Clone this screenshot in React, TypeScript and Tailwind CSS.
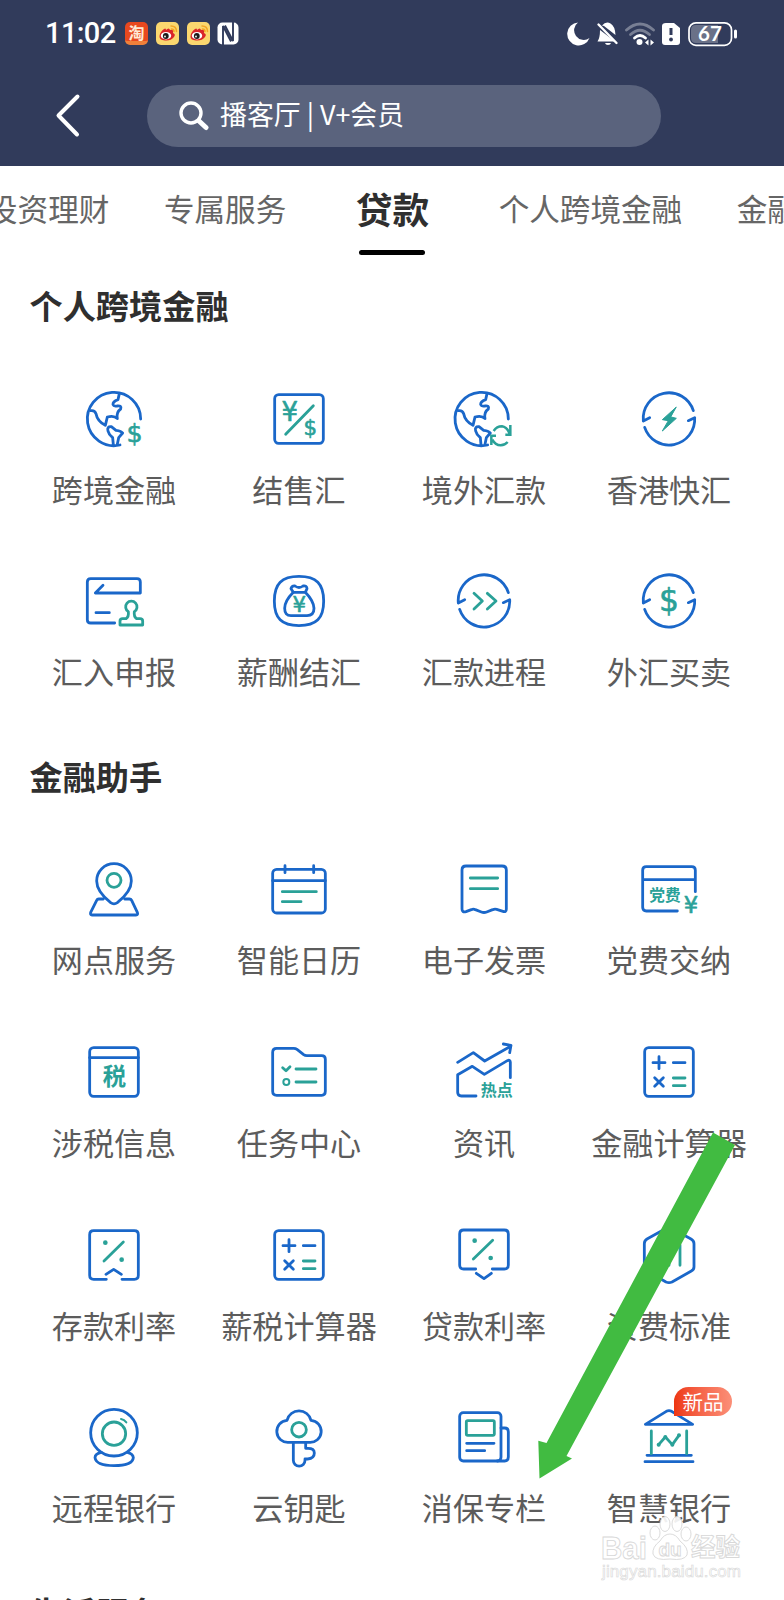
import type { ReactNode } from "react";

const BLUE = "#1a67c9";
const TEAL = "#2aa198";

function Icon({ children }: { children: ReactNode }) {
  return (
    <svg
      className="block h-[60px] w-[60px] shrink-0 overflow-visible"
      viewBox="-90 -90 180 180"
      fill="none"
      stroke={BLUE}
      strokeWidth={8.4}
      strokeLinecap="round"
      strokeLinejoin="round"
    >
      {children}
    </svg>
  );
}

// Characters centred on a point inside an icon.
function Glyph({ x, y, size, children }: { x: number; y: number; size: number; children: ReactNode }) {
  return (
    <text
      x={x}
      y={y + size * 0.37}
      fontSize={size}
      fontWeight={700}
      textAnchor="middle"
      fill={TEAL}
      stroke="none"
      className="font-['Noto_Sans_CJK_SC',sans-serif]"
    >
      {children}
    </text>
  );
}

function Currency({ x, y, size, children }: { x: number; y: number; size: number; children: string }) {
  return (
    <text
      x={x}
      y={y + size * (children === "$" ? 0.31 : 0.365)}
      fontSize={size}
      textAnchor="middle"
      fill={TEAL}
      stroke={TEAL}
      strokeWidth={1.8}
      className="font-['DejaVu_Sans',sans-serif]"
    >
      {children}
    </text>
  );
}

function Globe() {
  return (
    <>
      <path d="M80 0A80 80 0 1 0 18 78" />
      <path d="M16 -76L12 -58Q-4 -52 -3 -43Q-1 -37 9 -39Q24 -41 20 -30Q6 -20 10 -1Q0 -12 -20 -6L-26 19Q-50 6 -54 -16Q-58 -27 -70 -25" />
      <path d="M10 76L14 56L26 42Q22 36 6 34L-8 23Q-22 22 -18 36Q-16 46 -4 56L-2 77" />
    </>
  );
}

function CircleArrows() {
  return (
    <>
      <path d="M-58 -4L-77 6A77 77 0 0 1 73 -25" />
      <path d="M58 5L77 -4A77 77 0 0 1 -73 25" />
    </>
  );
}

function Calculator() {
  return (
    <Icon>
      <rect x={-73} y={-73} width={146} height={146} rx={12} />
      <path d="M-48 -28H-12M-30 -46V-10M13 -28H48M-43 17L-17 43M-17 17L-43 43" />
      <path d="M13 18H48M13 41H48" stroke={TEAL} />
    </Icon>
  );
}

const crossBorder = [
  {
    label: "跨境金融",
    icon: (
      <Icon>
        <Globe />
        <g stroke={TEAL} strokeWidth={4}>
          <Currency x={62} y={46} size={76}>$</Currency>
        </g>
      </Icon>
    ),
  },
  {
    label: "结售汇",
    icon: (
      <Icon>
        <rect x={-73} y={-73} width={146} height={146} rx={12} />
        <path d="M43 -40L-40 46" stroke={TEAL} />
        <Currency x={-28} y={-24} size={78}>¥</Currency>
        <Currency x={34} y={29} size={64}>$</Currency>
      </Icon>
    ),
  },
  {
    label: "境外汇款",
    icon: (
      <Icon>
        <g transform="translate(-7 0)">
          <Globe />
        </g>
        <g stroke={TEAL} strokeWidth={7.5} strokeLinecap="butt" strokeLinejoin="miter">
          <path d="M29 36Q38 22 54 22Q68 24 76 42M79 18V47H64" />
          <path d="M22 78V50H36M25 62Q34 79 50 79Q63 78 71 69" />
        </g>
      </Icon>
    ),
  },
  {
    label: "香港快汇",
    icon: (
      <Icon>
        <CircleArrows />
        <path d="M21 -35L-20 2L-2 5L-20 36L22 -2L6 -6Z" fill={TEAL} stroke={TEAL} strokeWidth={3} />
      </Icon>
    ),
  },
  {
    label: "汇入申报",
    icon: (
      <Icon>
        <path d="M2 66H-70Q-80 66 -80 56V-57Q-80 -67 -70 -67H69Q79 -67 79 -57V-24H-56L-33 -47M-54 35H-14" />
        <path d="M26 53H36Q45 48 43 32A17 17 0 1 1 61 32Q59 48 68 53H78Q86 53 86 60V72H18V60Q18 53 26 53Z" stroke={TEAL} />
      </Icon>
    ),
  },
  {
    label: "薪酬结汇",
    icon: (
      <Icon>
        <path d="M0 -74C52 -74 74 -52 74 0C74 52 52 74 0 74C-52 74 -74 52 -74 0C-74 -52 -52 -74 0 -74Z" />
        <path d="M-17 -26Q-43 0 -43 22Q-43 44 -24 44H24Q45 44 45 22Q44 0 19 -26Z" />
        <path d="M-17 -26L-24 -37Q-22 -46 -12 -45Q0 -36 12 -45Q24 -47 24 -37L19 -26" />
        <Currency x={1} y={11} size={64}>¥</Currency>
      </Icon>
    ),
  },
  {
    label: "汇款进程",
    icon: (
      <Icon>
        <CircleArrows />
        <path d="M-30 -23L-5 0L-30 24M10 -23L36 0L10 24" stroke={TEAL} />
      </Icon>
    ),
  },
  {
    label: "外汇买卖",
    icon: (
      <Icon>
        <CircleArrows />
        <Currency x={0} y={0} size={94}>$</Currency>
      </Icon>
    ),
  },
];

const assistant = [
  {
    label: "网点服务",
    icon: (
      <Icon>
        <path d="M-10 41C-34 22 -52 2 -52 -24A52 52 0 0 1 52 -24C52 2 34 22 10 41Q0 48 -10 41Z" />
        <path d="M-32 30H-46Q-50 30 -52 34L-70 70Q-72 78 -66 78H66Q73 78 70 70L53 34Q51 30 46 30H32" />
        <circle cx={0} cy={-26} r={21} stroke={TEAL} />
      </Icon>
    ),
  },
  {
    label: "智能日历",
    icon: (
      <Icon>
        <rect x={-79} y={-59} width={158} height={131} rx={12} />
        <path d="M-79 -25H79M-42 -70V-49M44 -70V-49" />
        <path d="M-50 8H52M-50 38H6" stroke={TEAL} />
      </Icon>
    ),
  },
  {
    label: "电子发票",
    icon: (
      <Icon>
        <path d="M-66 60V-57Q-66 -69 -54 -69H54Q67 -69 67 -57V60Q67 71 57 67L38 61Q32 59 26 62L8 69Q0 72 -8 69L-26 62Q-32 59 -38 62L-54 68Q-66 71 -66 60Z" />
        <path d="M-41 -33H41M-41 -1H41" stroke={TEAL} />
      </Icon>
    ),
  },
  {
    label: "党费交纳",
    icon: (
      <Icon>
        <path d="M25 66H-68Q-79 66 -79 55V-56Q-79 -67 -68 -67H68Q79 -67 79 -56V8M-79 -28H79" />
        <Glyph x={-12} y={19} size={47}>党费</Glyph>
        <Currency x={66} y={48} size={68}>¥</Currency>
      </Icon>
    ),
  },
  {
    label: "涉税信息",
    icon: (
      <Icon>
        <rect x={-73} y={-73} width={146} height={146} rx={12} />
        <path d="M-73 -43H73" />
        <Glyph x={1} y={12} size={70}>税</Glyph>
      </Icon>
    ),
  },
  {
    label: "任务中心",
    icon: (
      <Icon>
        <path d="M-67 -71H-16Q-10 -71 -6 -68L14 -52Q18 -49 24 -49H68Q79 -49 79 -38V58Q79 70 68 70H-67Q-79 70 -79 58V-59Q-79 -71 -67 -71Z" />
        <path d="M-49 -13L-39 -4L-27 -16M-9 -9H51M-9 30H51" stroke={TEAL} />
        <circle cx={-38} cy={30} r={9} stroke={TEAL} strokeWidth={6} />
      </Icon>
    ),
  },
  {
    label: "资讯",
    icon: (
      <Icon>
        <path d="M-79 -29L-32 -58L2 -33L80 -77M58 -84L81 -80L77 -58" />
        <path d="M-24 72H-68Q-79 72 -79 61V8L-35 -17L1 7L70 -34Q79 -38 79 -29V17" />
        <Glyph x={38} y={53} size={48}>热点</Glyph>
      </Icon>
    ),
  },
  { label: "金融计算器", icon: <Calculator /> },
  {
    label: "存款利率",
    icon: (
      <Icon>
        <path d="M-23 73H-61Q-73 73 -73 61V-61Q-73 -73 -61 -73H61Q73 -73 73 -61V61Q73 73 61 73H24M-24 58L-1 43L22 58" />
        <path d="M28 -39L-30 18" stroke={TEAL} />
        <g fill={TEAL} stroke="none">
          <circle cx={-26} cy={-37} r={7} />
          <circle cx={23} cy={14} r={7} />
        </g>
      </Icon>
    ),
  },
  { label: "薪税计算器", icon: <Calculator /> },
  {
    label: "贷款利率",
    icon: (
      <Icon>
        <path d="M-25 42H-61Q-73 42 -73 30V-63Q-73 -75 -61 -75H61Q73 -75 73 -63V30Q73 42 61 42H25M-23 55L0 71L22 55" />
        <path d="M26 -44L-32 12" stroke={TEAL} />
        <g fill={TEAL} stroke="none">
          <circle cx={-28} cy={-43} r={7} />
          <circle cx={20} cy={9} r={7} />
        </g>
      </Icon>
    ),
  },
  {
    label: "资费标准",
    icon: (
      <Icon>
        <path d="M-8 -80Q0 -84 8 -80L66 -48Q75 -43 75 -34V35Q75 44 67 48L9 81Q0 85 -9 81L-66 48Q-74 43 -74 34V-34Q-74 -43 -66 -48Z" />
        <path d="M33 -30V31M0 -10V31M-33 5V31" stroke={TEAL} />
      </Icon>
    ),
  },
  {
    label: "远程银行",
    icon: (
      <Icon>
        <circle cx={0} cy={-13} r={70} />
        <path d="M-38 46Q-57 50 -57 62Q-54 86 0 86Q56 86 58 62Q57 50 40 46" />
        <circle cx={0} cy={-10} r={35} stroke={TEAL} />
        <path d="M21 -54Q31 -52 37 -44" stroke={TEAL} strokeWidth={6} />
      </Icon>
    ),
  },
  {
    label: "云钥匙",
    icon: (
      <Icon>
        <path d="M-31 16A33 33 0 0 1 -36 -50A37 37 0 0 1 36 -50A33 33 0 0 1 31 16Z" />
        <path d="M-17 16V70A17.5 17.5 0 0 0 18 70V66H26Q46 64 46 48Q46 34 27 34H20V16" />
        <circle cx={0} cy={-22} r={22} stroke={TEAL} />
      </Icon>
    ),
  },
  {
    label: "消保专栏",
    icon: (
      <Icon>
        <rect x={-73} y={-73} width={124} height={145} rx={11} />
        <path d="M51 -27H62Q73 -27 73 -16V60Q73 72 62 72H40M-52 19H30M-52 41H2" />
        <rect x={-53} y={-49} width={84} height={44} rx={4} stroke={TEAL} />
      </Icon>
    ),
  },
  {
    label: "智慧银行",
    badge: "新品",
    icon: (
      <Icon>
        <path d="M-71 -38L-8 -77Q0 -81 8 -77L71 -38ZM-66 55H67M-72 74H72" />
        <path d="M-53 -18V50M53 -18V50M-31 23L-11 0L10 23L30 -5" stroke={TEAL} />
        <g fill={TEAL} stroke="none">
          <circle cx={-31} cy={23} r={6} />
          <circle cx={-11} cy={0} r={6} />
          <circle cx={10} cy={23} r={6} />
          <circle cx={30} cy={-5} r={6} />
        </g>
      </Icon>
    ),
  },
];

type Item = { label: string; icon: ReactNode; badge?: string };

function Section({ title, items }: { title: string; items: Item[] }) {
  return (
    <section className="-mb-[2.5px]">
      <h2 className="pl-[29.5px] text-[33.2px] leading-[48px] font-bold text-[#2f2f2f]">{title}</h2>
      <div className="ml-[21.5px] grid w-[740px] grid-cols-4 pt-[59.5px]">
        {items.map((item) => (
          <div key={item.label} className="relative flex h-[182.75px] flex-col items-center">
            {item.icon}
            <span className="mt-[17px] text-[31.1px] leading-[46px] whitespace-nowrap text-[#5c5c5c]">{item.label}</span>
            {item.badge && (
              <span className="absolute top-[-20.5px] left-[97.5px] flex h-[29px] w-[58px] items-center justify-center rounded-[14.5px] rounded-bl-none bg-linear-to-r from-[#ee3610] to-[#fb8f78] text-[20.5px] text-white">
                {item.badge}
              </span>
            )}
          </div>
        ))}
      </div>
    </section>
  );
}

function Weibo() {
  return (
    <svg className="h-[23px] w-[23px]" viewBox="0 0 23 23" fill="none">
      <rect width={23} height={23} rx={5} fill="#fbd76f" />
      <path d="M10 8Q13 5 14 8Q18 7 17 11Q20 12 18 15Q15 19 9 18.5Q3 18 3.5 14Q4 10 8 7Q10 5.5 10 8Z" fill="#d9252a" />
      <ellipse cx={10} cy={13.7} rx={5.2} ry={3.7} fill="#fff" />
      <circle cx={9.8} cy={14} r={2.9} fill="#1b1b1b" />
      <circle cx={9} cy={14.5} r={0.9} fill="#fff" />
      <path d="M15.5 7Q18 7 18 9.5M15 4Q20.5 4 20.5 9.5" stroke="#f5a623" strokeWidth={1.5} strokeLinecap="round" />
    </svg>
  );
}

function StatusBar() {
  return (
    <div className="flex h-[67px] items-center justify-between pr-[46px] pl-[45px] text-white">
      <div className="flex items-center">
        <span className="w-[80px] font-['Roboto',sans-serif] text-[29px] leading-none font-medium tracking-[-0.6px]">11:02</span>
        <span className="flex h-[23px] w-[23px] items-center justify-center rounded-[5px] border-b-4 border-[#f0803a] bg-[#e8481f] text-[16px] leading-none font-bold text-[#ffe9d6]">淘</span>
        <span className="ml-2"><Weibo /></span>
        <span className="ml-2"><Weibo /></span>
        <svg className="ml-[7px] h-[23px] w-[22px]" viewBox="0 0 22 23" fill="none">
          <rect x={0.5} y={0.5} width={21} height={22} rx={5} fill="#fff" />
          <path d="M6 23V4L14 19.500M16 0V19L8 3.500" stroke="#313b5b" strokeWidth={1.900} />
        </svg>
      </div>
      <svg className="h-[26px] w-[171px]" viewBox="0 0 171 26" fill="none">
        <path d="M11 1.500A11.500 11.500 0 1 0 22.500 17A9.500 9.500 0 0 1 11 1.500Z" fill="#fff" />
        <path d="M35 4.500Q39 0 43.500 2.500Q48 5 48.500 14L37 5ZM33 9L48 20.500H30.500Q33 17 33 9ZM38 22H44Q43.500 24 41 24Q38.500 24 38 22Z" fill="#fff" />
        <path d="M31.500 3.500L49.500 22" stroke="#fff" strokeWidth={2.400} strokeLinecap="round" />
        <g stroke="#fff" strokeWidth={2.800} strokeLinecap="round">
          <path d="M59.500 9Q73 -3 86.500 9" opacity={0.35} />
          <path d="M63.500 13.500Q73 5 82.500 13.500" opacity={0.35} />
          <path d="M67.500 17Q73 12 78.500 17" />
        </g>
        <circle cx={72.500} cy={21} r={3} fill="#fff" />
        <path d="M78 21.500L81.500 18.500V24.500ZM87 21.500L83.500 18.500V24.500Z" fill="#fff" />
        <path d="M99 2H107L113 7V21Q113 24 110 24H98Q95 24 95 21V5Q95 2 99 2Z" fill="#fff" />
        <path d="M104 7V14" stroke="#313b5b" strokeWidth={3} />
        <circle cx={104} cy={18.500} r={1.900} fill="#313b5b" />
        <rect x={122} y={1.800} width={42.500} height={22.500} rx={7} stroke="#fff" strokeWidth={1.700} />
        <path d="M129 4H151V22H129Q124 22 124 17V9Q124 4 129 4Z" fill="#fff" fillOpacity={0.28} />
        <text x={143} y={20.200} textAnchor="middle" fontSize={20.500} fontWeight={700} fill="#fff" className="font-['Lato',sans-serif]">67</text>
        <path d="M168.500 10V16" stroke="#fff" strokeWidth={3} strokeLinecap="round" />
      </svg>
    </div>
  );
}

function Header() {
  return (
    <header className="h-[166px] bg-[#313b5b]">
      <StatusBar />
      <div className="flex items-center pt-[18px] pl-[54px]">
        <svg className="h-[46px] w-[28px]" viewBox="0 0 28 46" fill="none" stroke="#fff" strokeWidth={4} strokeLinecap="round" strokeLinejoin="round">
          <path d="M23.500 3.500L4.500 22.500L23 41.500" />
        </svg>
        <div className="ml-[65px] flex h-[62px] w-[514px] items-center rounded-full bg-[#5a637d] pl-[32px]">
          <svg className="h-[30px] w-[30px]" viewBox="0 0 30 30" fill="none" stroke="#fff" strokeLinecap="round">
            <circle cx={12} cy={12} r={10} strokeWidth={3.400} />
            <path d="M20 20L27 26.500" strokeWidth={5} />
          </svg>
          <span className="ml-[11px] pb-[3px] text-[26.900px] whitespace-nowrap text-white">播客厅 | V+会员</span>
        </div>
      </div>
    </header>
  );
}

const tabs = ["投资理财", "专属服务", "贷款", "个人跨境金融", "金融助手"];

function Tabs() {
  return (
    <nav className="-ml-[13px] flex h-[89px] w-[797px] items-center gap-[54.500px] overflow-hidden text-[30.600px] text-[#666]">
      {tabs.map((tab) =>
        tab === "贷款" ? (
          <div key={tab} className="mx-[15px] flex shrink-0 flex-col items-center self-end">
            <span className="text-[36.700px] leading-[54px] font-bold whitespace-nowrap text-[#2f2f2f]">{tab}</span>
            <span className="mt-[15px] h-[5px] w-[66px] rounded-full bg-black" />
          </div>
        ) : (
          <span key={tab} className="shrink-0 pb-1 whitespace-nowrap">{tab}</span>
        ),
      )}
    </nav>
  );
}

function Watermark() {
  return (
    <svg className="absolute top-[1512px] left-[598px] h-[76px] w-[150px]" viewBox="0 0 150 76" fill="#fff" stroke="#d4d4d4" strokeWidth={0.900} opacity={0.9}>
      <g className="font-['Liberation_Sans','Noto_Sans_CJK_SC',sans-serif]" fontWeight={700}>
        <text x={3} y={47} fontSize={32} textLength={46} lengthAdjust="spacingAndGlyphs">Bai</text>
        <ellipse cx={57} cy={21} rx={5} ry={7} />
        <ellipse cx={67} cy={12} rx={5} ry={7.500} />
        <ellipse cx={79} cy={12} rx={5} ry={7.500} />
        <ellipse cx={88} cy={22} rx={5} ry={7} />
        <path d="M72 22Q78 22 82 29Q91 36 89 43Q86 49 72 47Q57 49 55 42Q54 35 62 29Q66 22 72 22Z" />
        <text x={72} y={44} fontSize={19} textAnchor="middle">du</text>
        <text x={93} y={44} fontSize={24.500}>经验</text>
      </g>
      <text x={4} y={65} fontSize={17} strokeWidth={0.600} textLength={139} className="font-['Liberation_Sans',sans-serif]">jingyan.baidu.com</text>
    </svg>
  );
}

export default function App() {
  return (
    <div className="relative h-[1600px] w-[784px] overflow-hidden bg-white font-['Noto_Sans_CJK_SC',sans-serif]">
      <Header />
      <Tabs />
      <main className="pt-[26px]">
        <Section title="个人跨境金融" items={crossBorder} />
        <Section title="金融助手" items={assistant} />
        <Section title="生活服务" items={[]} />
      </main>
      <Watermark />
      <svg className="absolute top-[1130px] left-[530px] h-[350px] w-[210px]" viewBox="530 1130 210 350">
        <path d="M713 1132.500L735 1145L566.500 1456L572 1458.500L539.500 1478.500L538.300 1440.700L546.500 1443Z" fill="#41bb41" />
      </svg>
    </div>
  );
}
